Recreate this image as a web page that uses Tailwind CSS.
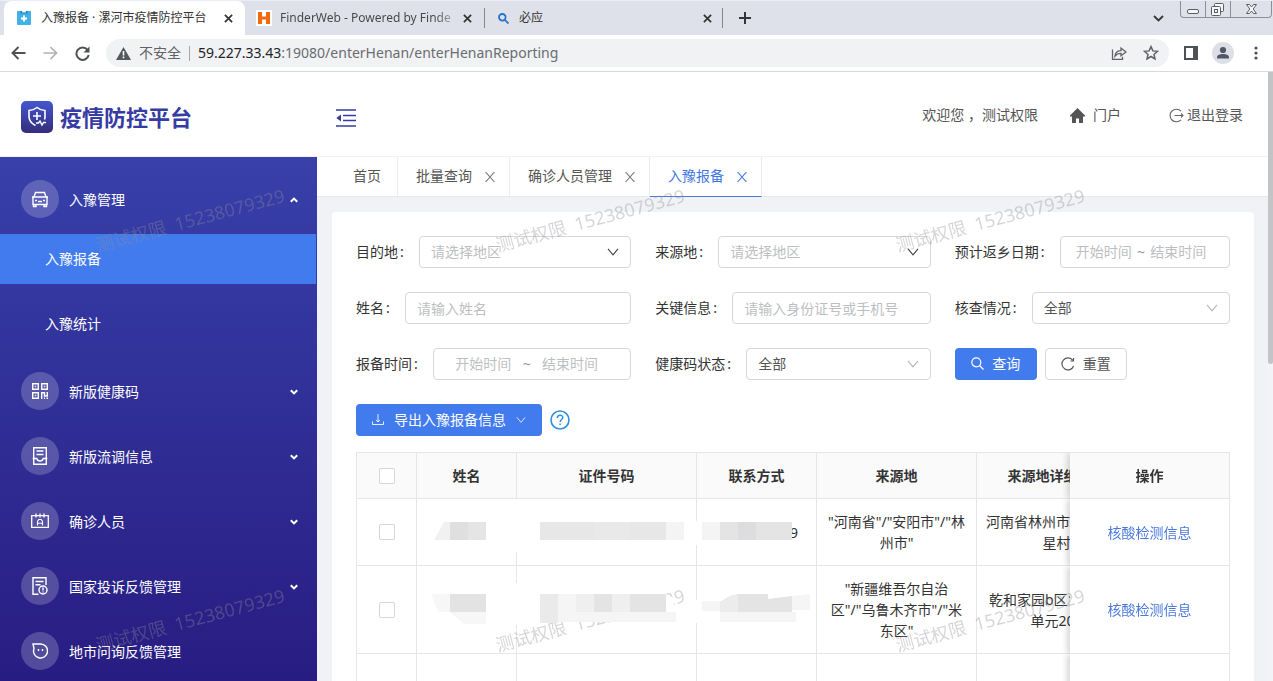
<!DOCTYPE html>
<html lang="zh-CN">
<head>
<meta charset="utf-8">
<title>入豫报备 · 漯河市疫情防控平台</title>
<script src="https://cdn.jsdelivr.net/npm/@tailwindcss/browser@4"></script>
</head>
<body class="bg-white font-['Noto_Sans','Noto_Sans_CJK_SC',sans-serif] text-sm text-[#333333]">
<!-- shared symbols -->
<svg class="hidden">
  <symbol id="x" viewBox="0 0 10 10"><path d="M1 1l8 8M9 1l-8 8" fill="none" stroke="currentColor" stroke-width="1.9"/></symbol>
  <symbol id="thin-x" viewBox="0 0 10 10"><path d="M.5 0l9 10M9.500 0l-9 10" fill="none" stroke="currentColor" stroke-width="1.100"/></symbol>
  <symbol id="down" viewBox="0 0 12 8"><path d="M1 .8l5 6 5-6" fill="none" stroke="currentColor" stroke-width="1.100"/></symbol>
  <symbol id="caret" viewBox="0 0 8 6"><path d="M.8 1.200L4 4.400l3.200-3.200" fill="none" stroke="currentColor" stroke-width="2"/></symbol>
</svg>
<div class="flex h-screen flex-col overflow-hidden">

  <!-- browser tab strip -->
  <div class="flex h-[35px] flex-none items-start justify-between border-t border-[#e9edf4] bg-[#dee1e9]">
    <div class="flex h-full items-center text-xs">
      <div class="h-full w-1"></div>
      <div class="flex h-full w-[241px] items-center rounded-t-lg bg-white pl-[13px] pr-3">
        <svg class="mr-2.5 size-[14px] flex-none" viewBox="0 0 14 14"><rect width="14" height="14" rx="1" fill="#42b1e8"/><path d="M3.500 0h7v2.500h-7z" fill="#2380b8"/><path d="M5 0h4v1.500H5z" fill="#d9f1fc"/><path d="M7 4.500v6M4 7.500h6" stroke="#fff" stroke-width="2"/></svg>
        <span class="flex-1 whitespace-nowrap">入豫报备 · 漯河市疫情防控平台</span>
        <button aria-label="关闭标签" class="text-[#333]"><svg class="size-[9px]"><use href="#x"/></svg></button>
      </div>
      <div class="flex h-full w-[239px] items-center pl-[11px]">
        <svg class="mr-2 size-4 flex-none" viewBox="0 0 16 16"><path fill="#fff" d="M0 0h16v16H0z"/><path d="M2 2h4v4.500h4V2h4v12h-4V9.500H6V14H2z" fill="#f2690d"/></svg>
        <span class="w-[175px] bg-linear-to-r from-[#42454a] from-88% to-[#b9bcc4] bg-clip-text whitespace-nowrap text-transparent">FinderWeb - Powered by Finde</span>
        <button aria-label="关闭标签" class="ml-2 text-[#333]"><svg class="size-[9px]"><use href="#x"/></svg></button>
      </div>
      <div class="flex h-5 w-[239px] items-center border-x border-[#85878d] pr-2.5 pl-[13px]">
        <svg class="mr-2.5 size-[11px] flex-none" viewBox="0 0 11 11" fill="none" stroke="#2474c4" stroke-width="1.800"><circle cx="4.300" cy="4.300" r="3.300"/><path d="M6.800 6.800l3.700 3.700"/></svg>
        <span class="flex-1">必应</span>
        <button aria-label="关闭标签" class="text-[#333]"><svg class="size-[9px]"><use href="#x"/></svg></button>
      </div>
      <button aria-label="新标签页" class="ml-4"><svg class="size-3" viewBox="0 0 12 12" stroke="#33353b" stroke-width="2"><path d="M6 0v12M0 6h12"/></svg></button>
    </div>
    <div class="flex pr-px">
      <button aria-label="搜索标签页" class="mt-3.5 mr-4 h-2"><svg class="h-2 w-[11px]" viewBox="0 0 11 8"><path d="M1 1l4.500 4.500L10 1" fill="none" stroke="#33353b" stroke-width="1.800"/></svg></button>
      <div class="flex h-[17px] rounded-b border border-t-0 border-[#8b8e96]">
        <button aria-label="最小化" class="w-[25px] border-r border-[#8b8e96]"><svg class="h-4 w-6" viewBox="0 0 24 16"><rect x="6.500" y="8.500" width="11" height="4" rx="1.500" fill="#f6f7f9" stroke="#5b5d62"/></svg></button>
        <button aria-label="还原" class="w-[25px] border-r border-[#8b8e96]"><svg class="h-4 w-6" viewBox="0 0 24 16" fill="#f6f7f9" stroke="#5b5d62"><rect x="8.500" y="2.500" width="9" height="8" rx="1"/><rect x="5.500" y="5.500" width="9" height="9" rx="1"/><rect x="8.500" y="8.500" width="3" height="3"/></svg></button>
        <button aria-label="关闭" class="w-10"><svg class="h-4 w-10" viewBox="0 0 40 16"><path d="M15.500 3.500h3l2 2.500 2-2.500h3L22.200 8l3.300 4.500h-3l-2-2.500-2 2.500h-3L18.800 8z" fill="#f6f7f9" stroke="#5b5d62"/></svg></button>
      </div>
    </div>
  </div>

  <!-- address bar -->
  <div class="flex h-[37px] flex-none items-center border-b border-[#d8d9db] bg-white pr-[15px] pl-[11px]">
    <button aria-label="后退"><svg class="h-[14px] w-[15px]" viewBox="0 0 15 14" fill="none" stroke="#4e5156" stroke-width="1.900"><path d="M14.500 7H1.500M7.500 1L1.500 7l6 6"/></svg></button>
    <button aria-label="前进" class="ml-[17px]"><svg class="h-[14px] w-[15px]" viewBox="0 0 15 14" fill="none" stroke="#b1b3b6" stroke-width="1.700"><path d="M.5 7h13M7.500 1l6 6-6 6"/></svg></button>
    <button aria-label="刷新" class="ml-[17px]"><svg class="size-[15px]" viewBox="0 0 15 15"><path d="M12.500 3.800A6.200 6.200 0 1 0 13.700 9" fill="none" stroke="#4e5156" stroke-width="2"/><path d="M14.500.5v6h-6z" fill="#4e5156"/></svg></button>
    <div class="ml-4 flex h-7 min-w-0 flex-1 items-center rounded-full bg-[#f1f2f3] pr-2.5 pl-2.5">
      <svg class="mr-2 h-[13px] w-[15px] flex-none" viewBox="0 0 15 13"><path d="M7.500 0L15 13H0z" fill="#55585d"/><path d="M7.500 4v4.500M7.500 9.500v1.800" stroke="#fff" stroke-width="1.600"/></svg>
      <span class="whitespace-nowrap text-[#5f6368]">不安全</span>
      <span class="mx-2 h-[15px] w-px bg-[#a4a6aa]"></span>
      <span class="flex-1 truncate text-[#6a6d72]"><span class="text-[#222427]">59.227.33.43</span>:19080/enterHenan/enterHenanReporting</span>
      <button aria-label="分享"><svg class="size-4" viewBox="0 0 16 16" fill="none" stroke="#5f6368" stroke-width="1.300"><path d="M1.500 4.500v9.800h10v-2.500M4 11c.5-4 3-5.300 6-5.300V3l5 4-5 3.800V8.300C7.500 8.300 5.500 9 4 11z"/></svg></button>
      <button aria-label="收藏" class="ml-4"><svg class="size-4" viewBox="0 0 16 16" fill="none" stroke="#5f6368" stroke-width="1.500"><path d="M8 1.600l1.900 4.300 4.600.4-3.500 3.100 1 4.600-4-2.500L4 14l1-4.600-3.500-3.100 4.600-.4z"/></svg></button>
    </div>
    <button aria-label="侧边栏" class="ml-[15px]"><svg class="size-[14px]" viewBox="0 0 14 14"><path d="M1 1h12v12H1z" fill="#fff" stroke="#4e5156" stroke-width="2"/><path d="M9 1h4v12H9z" fill="#4e5156"/></svg></button>
    <button aria-label="用户" class="ml-3.5"><svg class="size-[22px]" viewBox="0 0 22 22"><circle cx="11" cy="11" r="11" fill="#dcdfe6"/><circle cx="11" cy="8" r="3.100" fill="#4f5769"/><path d="M5 16.500v-1.300c0-2 3-3.200 6-3.200s6 1.200 6 3.200v1.300z" fill="#4f5769"/></svg></button>
    <button aria-label="菜单" class="ml-5"><svg class="h-[14px] w-1" viewBox="0 0 4 14" fill="#4e5156"><circle cx="2" cy="2" r="1.600"/><circle cx="2" cy="7" r="1.600"/><circle cx="2" cy="12" r="1.600"/></svg></button>
  </div>

  <!-- page -->
  <div class="relative flex min-h-0 flex-1">
    <div class="flex min-w-0 flex-1 flex-col">
      <header class="flex h-[85px] flex-none items-center border-b border-[#f2f2f4] bg-white pr-[25px] pl-[21px]">
        <svg class="mt-1.5 size-8 flex-none" viewBox="0 0 32 32"><defs><linearGradient id="lg" x1="0" y1="0" x2="0" y2="1"><stop stop-color="#4457d0"/><stop offset="1" stop-color="#352c7a"/></linearGradient></defs><rect width="32" height="32" rx="5" fill="url(#lg)"/><path d="M14.500 24.500C10.500 22.500 8 19.500 8 15.500V9.500c3.500 0 5.500-1 8-3 2.500 2 4.500 3 8 3v6c0 1-.1 2-.5 3" fill="none" stroke="#fff" stroke-width="1.600"/><path d="M16 11v8M12 15h8" stroke="#fff" stroke-width="1.600"/><path d="M15 22h2.500l1.500-2 2 4 1.500-2.500H25" fill="none" stroke="#fff" stroke-width="1.400"/></svg>
        <h1 class="mt-1.5 ml-[7px] w-[276px] text-[22px] leading-8 font-bold whitespace-nowrap text-[#363ca3]">疫情防控平台</h1>
        <button aria-label="收起菜单" class="mt-2"><svg class="h-5 w-5" viewBox="0 0 20 20"><path d="M0 2h20M7 7.500h13M7 12.500h13M0 18h20" stroke="#363ca3" stroke-width="1.700"/><path d="M5 6.500v7L.3 10z" fill="#363ca3"/></svg></button>
        <div class="ml-auto flex items-center pt-0.5 whitespace-nowrap text-[#555]">
          <span>欢迎您 ，测试权限</span>
          <a href="#" class="ml-8 flex items-center gap-2"><svg class="h-[15px] w-[15px]" viewBox="0 0 15 15"><path d="M7.500 0L15 7.500v1h-2V15H9v-4.500H6V15H2V8.500H0v-1z" fill="#555"/></svg>门户</a>
          <a href="#" class="ml-12 flex items-center gap-[3px]"><svg class="size-[15px]" viewBox="0 0 15 15" fill="none" stroke="#666" stroke-width="1.100"><path d="M12 3.200A6.300 6.300 0 1 0 12 11.800M5.500 7.500h8M12 5.500l2 2-2 2"/></svg>退出登录</a>
        </div>
      </header>

      <div class="flex min-h-0 flex-1">
        <!-- sidebar -->
        <nav class="w-[317px] flex-none overflow-hidden bg-linear-to-b from-[#3840aa] to-[#281c82] pt-2.5 text-white">
          <button class="flex h-[65px] w-full items-center pr-[19px] pb-px pl-[21px]">
            <span class="mr-2.5 flex size-[38px] items-center justify-center rounded-full bg-white/20"><svg class="size-[18px]" viewBox="0 0 18 18" fill="none" stroke="#fff" stroke-width="1.400"><path d="M3 7l1.500-4.500h9L15 7M1 7h16M2 7v7.500h14V7M5 14v2.500H2.500V14M13 14v2.500h2.500V14M4 10.500h2M12 10.500h2M7 11.500h4"/></svg></span>
            <span class="pt-0.5">入豫管理</span><svg class="mt-0.5 ml-auto h-1.5 w-2 rotate-180"><use href="#caret"/></svg>
          </button>
          <a href="#" class="mt-0.5 mr-px flex h-[50px] items-center bg-[#427bee] pl-[45px]">入豫报备</a>
          <a href="#" class="mt-[15px] mb-2.5 flex h-[50px] items-center pl-[45px]">入豫统计</a>
          <button class="flex h-[65px] w-full items-center pr-[19px] pb-px pl-[21px]">
            <span class="mr-2.5 flex size-[38px] items-center justify-center rounded-full bg-white/20"><svg class="size-4" viewBox="0 0 16 16" fill="none" stroke="#fff" stroke-width="1.400"><path d="M.7.7h5.600v5.600H.7zM9.700.7h5.600v5.600H9.700zM.7 9.700h5.600v5.600H.7zM9.700 16V9.700h2.800V13h2.800V9M12 15.300h1M14.500 15.300H16"/><path d="M3 3h1v1H3zM12 3h1v1h-1zM3 12h1v1H3z" stroke-width=".6"/></svg></span>
            <span class="pt-0.5">新版健康码</span><svg class="mt-0.5 ml-auto h-1.5 w-2"><use href="#caret"/></svg>
          </button>
          <button class="flex h-[65px] w-full items-center pr-[19px] pb-px pl-[21px]">
            <span class="mr-2.5 flex size-[38px] items-center justify-center rounded-full bg-white/20"><svg class="h-[18px] w-4" viewBox="0 0 16 18" fill="none" stroke="#fff" stroke-width="1.400"><path d="M1.700 11V.7h12.600V11M4.500 4h7M4.500 7.500h7M.7 11.500h4c.5 2 1.500 2.500 3.300 2.500s2.800-.5 3.300-2.500h4M1.700 11v6.300h12.600V11"/></svg></span>
            <span class="pt-0.5">新版流调信息</span><svg class="mt-0.5 ml-auto h-1.5 w-2"><use href="#caret"/></svg>
          </button>
          <button class="flex h-[65px] w-full items-center pr-[19px] pb-px pl-[21px]">
            <span class="mr-2.5 flex size-[38px] items-center justify-center rounded-full bg-white/20"><svg class="h-4 w-[18px]" viewBox="0 0 18 16" fill="none" stroke="#fff" stroke-width="1.300"><path d="M.7 2.700h16.600v11.600H.7zM5 .5v4M9 .5v4M13 .5v4"/><path d="M6.500 12.500V8.500l1.300-2h2.400l1.300 2v4M6.500 10.300h5" stroke-width="1.100"/></svg></span>
            <span class="pt-0.5">确诊人员</span><svg class="mt-0.5 ml-auto h-1.5 w-2"><use href="#caret"/></svg>
          </button>
          <button class="flex h-[65px] w-full items-center pr-[19px] pb-px pl-[21px]">
            <span class="mr-2.5 flex size-[38px] items-center justify-center rounded-full bg-white/20"><svg class="h-[18px] w-4" viewBox="0 0 16 18" fill="none" stroke="#fff" stroke-width="1.400"><path d="M6.500 17.300H1V.7h13V8M3.500 4.500h8M3.500 7.800h5"/><circle cx="11" cy="13" r="4"/><path d="M11 10.500v3M11 14.500v1"/></svg></span>
            <span class="pt-0.5">国家投诉反馈管理</span><svg class="mt-0.5 ml-auto h-1.5 w-2"><use href="#caret"/></svg>
          </button>
          <button class="flex h-[65px] w-full items-center pr-[19px] pb-px pl-[21px]">
            <span class="mr-2.5 flex size-[38px] items-center justify-center rounded-full bg-white/20"><svg class="size-4" viewBox="0 0 16 16" fill="none" stroke="#fff" stroke-width="1.400"><path d="M1 1h7.500A7 7 0 1 1 2 5.500z"/><path d="M6.500 6v2M10.500 6v2"/></svg></span>
            <span class="pt-0.5">地市问询反馈管理</span>
          </button>
        </nav>

        <main class="flex min-w-0 flex-1 flex-col bg-[#f0f2f5]">
          <div class="flex h-10 flex-none border-b border-[#e6e8ec] bg-white pl-[18px] text-[#555]">
            <a href="#" class="flex items-center border-r border-[#ececef] pr-4 pb-0.5 pl-[18px]">首页</a>
            <div class="flex items-center border-r border-[#ececef] pr-[14px] pl-[18px]"><a href="#" class="pb-0.5">批量查询</a><button aria-label="关闭批量查询" class="ml-[13px]"><svg class="size-2.5 text-[#777]"><use href="#thin-x"/></svg></button></div>
            <div class="flex items-center border-r border-[#ececef] pr-[14px] pl-[18px]"><a href="#" class="pb-0.5">确诊人员管理</a><button aria-label="关闭确诊人员管理" class="ml-[13px]"><svg class="size-2.5 text-[#777]"><use href="#thin-x"/></svg></button></div>
            <div class="-mb-px flex items-center border-r border-b border-r-[#ececef] border-b-[#4a78dd] pr-[14px] pl-[18px] text-[#4377e0]"><a href="#" class="pb-0.5">入豫报备</a><button aria-label="关闭入豫报备" class="ml-[13px]"><svg class="size-2.5"><use href="#thin-x"/></svg></button></div>
          </div>

          <section class="mt-[15px] mr-3.5 ml-[15px] min-h-0 flex-1 overflow-hidden rounded-t bg-white p-6">
            <form class="grid grid-cols-3 gap-6">
              <div class="flex h-8 items-center whitespace-nowrap">
                <label for="dest" class="after:inline-block after:w-[21px] after:pl-0.5 after:content-[':']">目的地</label>
                <span class="relative h-8 min-w-0 flex-1"><select id="dest" class="h-8 w-full appearance-none rounded border border-[#d5d7da] bg-white px-[11px] text-[#bdbfc2]"><option>请选择地区</option></select><svg class="pointer-events-none absolute top-3 right-3 h-2 w-3 text-[#444]"><use href="#down"/></svg></span>
              </div>
              <div class="flex h-8 items-center whitespace-nowrap">
                <label for="src" class="after:inline-block after:w-[21px] after:pl-0.5 after:content-[':']">来源地</label>
                <span class="relative h-8 min-w-0 flex-1"><select id="src" class="h-8 w-full appearance-none rounded border border-[#d5d7da] bg-white px-[11px] text-[#bdbfc2]"><option>请选择地区</option></select><svg class="pointer-events-none absolute top-3 right-3 h-2 w-3 text-[#444]"><use href="#down"/></svg></span>
              </div>
              <div class="flex h-8 items-center whitespace-nowrap">
                <label for="back1" class="after:inline-block after:w-[21px] after:pl-0.5 after:content-[':']">预计返乡日期</label>
                <span class="flex h-8 min-w-0 flex-1 items-center rounded border border-[#d5d7da] px-[11px] text-[#999]"><input id="back1" class="w-[44%] text-center placeholder:text-[#bdbfc2]" placeholder="开始时间"><span class="w-2.5 text-center">~</span><input aria-label="预计返乡日期结束" class="w-[44%] text-center placeholder:text-[#bdbfc2]" placeholder="结束时间"></span>
              </div>
              <div class="flex h-8 items-center whitespace-nowrap">
                <label for="name" class="after:inline-block after:w-[21px] after:pl-0.5 after:content-[':']">姓名</label>
                <input id="name" class="h-8 min-w-0 flex-1 rounded border border-[#d5d7da] px-[11px] placeholder:text-[#bdbfc2]" placeholder="请输入姓名">
              </div>
              <div class="flex h-8 items-center whitespace-nowrap">
                <label for="key" class="after:inline-block after:w-[21px] after:pl-0.5 after:content-[':']">关键信息</label>
                <input id="key" class="h-8 min-w-0 flex-1 rounded border border-[#d5d7da] px-[11px] placeholder:text-[#bdbfc2]" placeholder="请输入身份证号或手机号">
              </div>
              <div class="flex h-8 items-center whitespace-nowrap">
                <label for="check" class="after:inline-block after:w-[21px] after:pl-0.5 after:content-[':']">核查情况</label>
                <span class="relative h-8 min-w-0 flex-1"><select id="check" class="h-8 w-full appearance-none rounded border border-[#d5d7da] bg-white px-[11px] text-[#555]"><option>全部</option></select><svg class="pointer-events-none absolute top-3 right-3 h-2 w-3 text-[#b5b7ba]"><use href="#down"/></svg></span>
              </div>
              <div class="flex h-8 items-center whitespace-nowrap">
                <label for="rep1" class="after:inline-block after:w-[21px] after:pl-0.5 after:content-[':']">报备时间</label>
                <span class="flex h-8 min-w-0 flex-1 items-center rounded border border-[#d5d7da] px-[11px] text-[#999]"><input id="rep1" class="w-[44%] text-center placeholder:text-[#bdbfc2]" placeholder="开始时间"><span class="w-2.5 text-center">~</span><input aria-label="报备时间结束" class="w-[44%] text-center placeholder:text-[#bdbfc2]" placeholder="结束时间"></span>
              </div>
              <div class="flex h-8 items-center whitespace-nowrap">
                <label for="code" class="after:inline-block after:w-[21px] after:pl-0.5 after:content-[':']">健康码状态</label>
                <span class="relative h-8 min-w-0 flex-1"><select id="code" class="h-8 w-full appearance-none rounded border border-[#d5d7da] bg-white px-[11px] text-[#555]"><option>全部</option></select><svg class="pointer-events-none absolute top-3 right-3 h-2 w-3 text-[#b5b7ba]"><use href="#down"/></svg></span>
              </div>
              <div class="flex h-8 gap-2">
                <button type="button" class="flex h-8 w-[82px] items-center justify-center gap-2 rounded bg-[#427bee] text-white"><svg class="-mt-0.5 size-[13px]" viewBox="0 0 13 13" fill="none" stroke="#fff" stroke-width="1.200"><circle cx="5.300" cy="5.300" r="4.500"/><path d="M8.500 8.500l4 4"/></svg>查询</button>
                <button type="button" class="flex h-8 w-[82px] items-center justify-center gap-2 rounded border border-[#d5d7da] text-[#555]"><svg class="size-[14px]" viewBox="0 0 14 14" fill="none" stroke="#555" stroke-width="1.200"><path d="M11.800 3.300A6 6 0 1 0 12.600 9"/><path d="M12.500 1v3h-3" /></svg>重置</button>
              </div>
            </form>

            <div class="mt-6 flex items-center gap-2">
              <button class="flex h-8 w-[186px] items-center justify-center rounded bg-[#427bee] text-white"><svg class="mr-2.5 size-3" viewBox="0 0 12 12" fill="none" stroke="#fff" stroke-opacity=".85"><path d="M6 0v8M4 6l2 2 2-2M.5 7.500v3h11v-3"/></svg>导出入豫报备信息<svg class="ml-2.5 h-2 w-2.5 text-white/85"><use href="#down"/></svg></button>
              <button aria-label="帮助"><svg class="size-5" viewBox="0 0 20 20" fill="none" stroke="#2e8fe3"><circle cx="10" cy="10" r="9" stroke-width="1.600"/><path d="M7.300 8c0-3.700 5.500-3.600 5.500-.5 0 2-2.700 2.100-2.700 4.500M10.100 13.500V15" stroke-width="1.500"/></svg></button>
            </div>

            <!-- results -->
            <div class="relative mt-4 overflow-hidden border-t border-l border-[#e6e6e8]">
              <table class="w-[940px] min-w-full table-fixed border-separate border-spacing-0 text-center leading-[21px] [&_td]:border-r [&_td]:border-b [&_td]:border-[#e6e6e8] [&_td]:px-[9px] [&_td]:py-3 [&_th]:border-r [&_th]:border-b [&_th]:border-[#e6e6e8] [&_th]:bg-[#fafafa] [&_th]:py-3 [&_th]:whitespace-nowrap">
                <colgroup><col class="w-[60px]"><col class="w-[100px]"><col class="w-[180px]"><col class="w-[120px]"><col class="w-[160px]"><col class="w-[160px]"><col class="w-[160px]"></colgroup>
                <thead>
                  <tr>
                    <th><input type="checkbox" aria-label="全选" class="mx-auto block size-4 appearance-none rounded-xs border border-[#d5d7da] bg-white"></th>
                    <th>姓名</th><th>证件号码</th><th>联系方式</th><th>来源地</th><th>来源地详细地址</th>
                    <th class="sticky right-0 shadow-[-3px_0_6px_rgba(0,0,0,0.16)] [clip-path:inset(0_0_0_-10px)]">操作</th>
                  </tr>
                </thead>
                <tbody>
                  <tr>
                    <td><input type="checkbox" aria-label="选择第一行" class="mx-auto block size-4 appearance-none rounded-xs border border-[#d5d7da] bg-white"></td>
                    <td></td><td></td><td><div class="pr-[9px] text-right">9</div></td>
                    <td>"河南省"/"安阳市"/"林州市"</td>
                    <td><div class="text-left">河南省林州市</div>星村</td>
                    <td class="sticky right-0 bg-white shadow-[-3px_0_6px_rgba(0,0,0,0.16)] [clip-path:inset(0_0_0_-10px)]"><a href="#" class="text-[#4a78dd]">核酸检测信息</a></td>
                  </tr>
                  <tr>
                    <td><input type="checkbox" aria-label="选择第二行" class="mx-auto block size-4 appearance-none rounded-xs border border-[#d5d7da] bg-white"></td>
                    <td></td><td></td><td></td>
                    <td>"新疆维吾尔自治区"/"乌鲁木齐市"/"米东区"</td>
                    <td><div class="pl-[3px] text-left">乾和家园b区1</div>单元201</td>
                    <td class="sticky right-0 bg-white shadow-[-3px_0_6px_rgba(0,0,0,0.16)] [clip-path:inset(0_0_0_-10px)]"><a href="#" class="text-[#4a78dd]">核酸检测信息</a></td>
                  </tr>
                  <tr>
                    <td class="h-[88px]"></td><td></td><td></td><td></td><td></td><td></td>
                    <td class="sticky right-0 bg-white shadow-[-3px_0_6px_rgba(0,0,0,0.16)] [clip-path:inset(0_0_0_-10px)]"></td>
                  </tr>
                </tbody>
              </table>
            </div>
          </section>
        </main>
      </div>
    </div>
    <!-- page scrollbar -->
    <div class="w-[5px] flex-none bg-[#f3f4f6]"><div class="h-[48%] rounded-b bg-[#c3c4c6]"></div></div>

    <!-- watermark tiles and the masks over private cells -->
    <svg class="pointer-events-none absolute inset-0 h-full w-full" font-size="18" fill="#8c8c96" fill-opacity=".36">
      <g>
        <text transform="translate(98 180) rotate(-15)">测试权限&#160;&#160;15238079329</text>
        <text transform="translate(498 180) rotate(-15)">测试权限&#160;&#160;15238079329</text>
        <text transform="translate(898 180) rotate(-15)">测试权限&#160;&#160;15238079329</text>
        <text transform="translate(98 580) rotate(-15)">测试权限&#160;&#160;15238079329</text>
        <text transform="translate(498 580) rotate(-15)">测试权限&#160;&#160;15238079329</text>
        <text transform="translate(898 580) rotate(-15)">测试权限&#160;&#160;15238079329</text>
      </g>
      <g transform="translate(0 -72)" fill-opacity="1">
        <path d="M497 499h20v13h-20zM510 512h12v40h-12zM690 521h10v24h-10zM500 583h30v42h-30zM532 594h134l8 4v24H532zM690 600h12v23h-12z" fill="#fff"/>
        <path d="M444 522h6v18h-16z" fill="#f1f1f1"/>
        <path d="M450 522h18v18h-18z" fill="#dfdfdf"/><path d="M468 522h18v18h-18z" fill="#e5e5e5"/>
        <path d="M540 522h126v18H540z" fill="#e7e7e8"/><path d="M594 522h36v18h-36z" fill="#e9e9ea"/><path d="M666 522h18v18h-18zM702 522h18v18h-18z" fill="#f4f4f5"/>
        <path d="M720 522h72v18h-72z" fill="#e4e4e5"/><path d="M738 522h18v18h-18z" fill="#dddddf"/>
        <path d="M431 594h19v18h-12zM450 612h36v12h-22z" fill="#f7f7f7"/><path d="M450 594h36v18h-36z" fill="#e3e3e4"/>
        <path d="M540 594h18v29h-18z" fill="#eaeaeb"/><path d="M558 594h36v28h-36zM594 612h82v10h-82z" fill="#f5f5f6"/><path d="M576 594h18v18h-18zM612 594h18v18h-18z" fill="#efeff0"/><path d="M594 594h18v18h-18zM630 594h36v18h-36z" fill="#e4e4e5"/>
        <path d="M702 601h18v10h-18zM720 612h76v10h-76zM792 596l18-2v16h-18z" fill="#f5f5f6"/><path d="M720 602l10-6 8-2h30v5l24-3v16h-72z" fill="#e4e4e5"/><path d="M720 602l10-6 8-2v18h-18z" fill="#ececed"/>
      </g>
    </svg>
  </div>
</div>
</body>
</html>
